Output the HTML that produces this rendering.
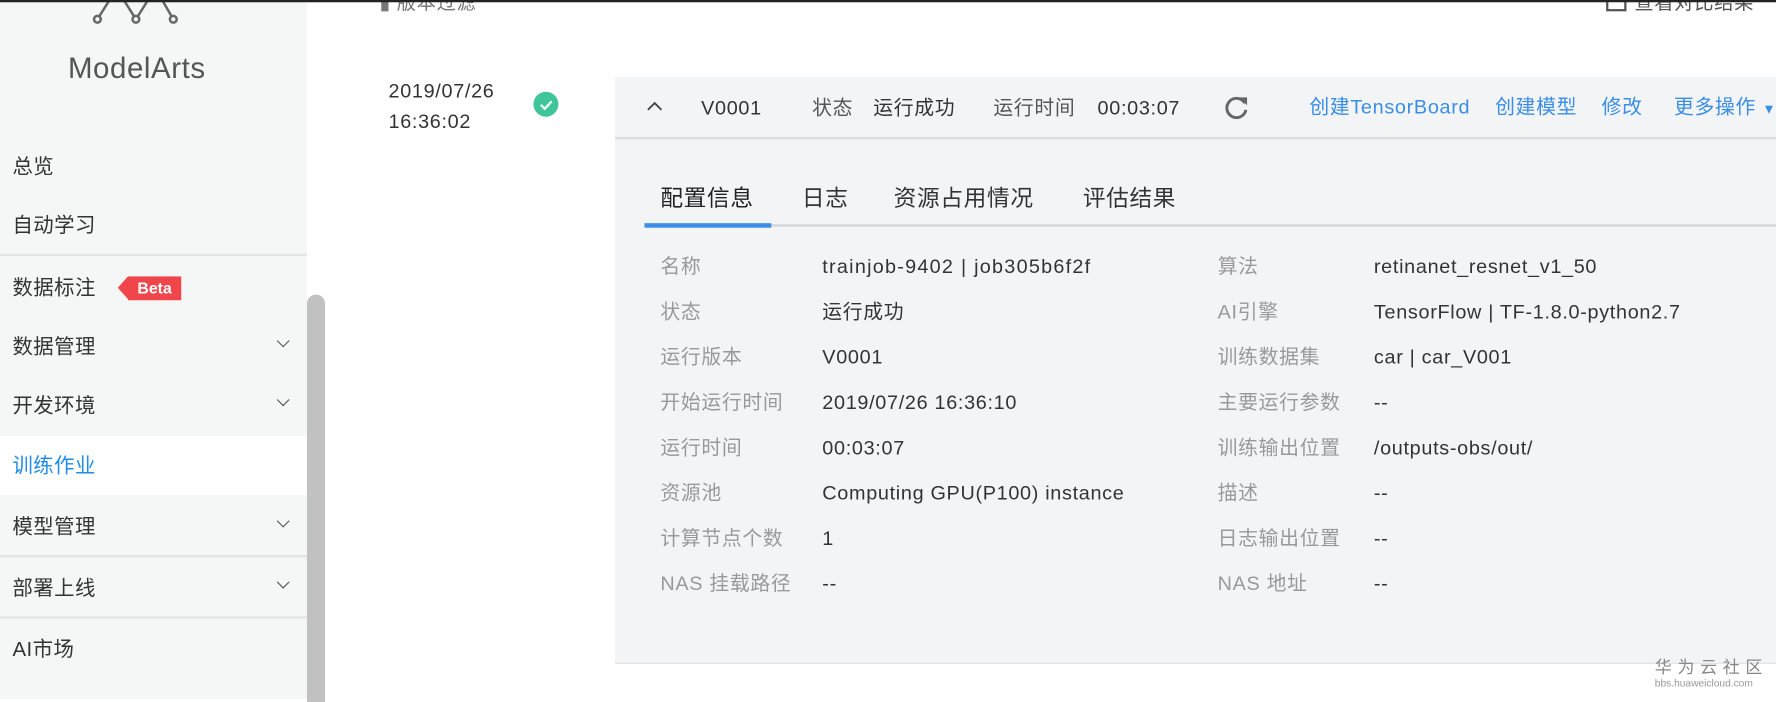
<!DOCTYPE html>
<html><head><meta charset="utf-8"><style>
html,body{margin:0;padding:0;overflow:hidden;background:#fff}
#w{position:absolute;left:0;top:0;width:1568px;height:617px;transform:scale(1.13265,1.13290);transform-origin:0 0;font-family:"Liberation Sans","Noto Sans CJK SC",sans-serif;color:#333;letter-spacing:0.6px}
.a{position:absolute;white-space:nowrap;line-height:1}
.sb{position:absolute;left:0;top:0;width:271px;height:617px;background:#f5f6f6}
.mi{position:absolute;left:11px;font-size:18px;color:#333;line-height:1;letter-spacing:0.4px}
.chev{position:absolute;left:246px;width:7px;height:7px;border-right:1.5px solid #555;border-bottom:1.5px solid #555;transform:rotate(45deg)}
.dv{position:absolute;left:0;width:271px;height:2px;background:#e3e3e3}
.lb{color:#999;font-size:17.5px}
.vl{color:#333;font-size:17.5px}
.lk{color:#3a8ee6;font-size:17.5px}
</style></head><body><div id="w">
<div style="position:absolute;left:0;top:0;width:1568px;height:2px;background:#222;z-index:5"></div>
<div class="sb"></div>
<svg class="a" style="left:78px;top:0" width="90" height="24" viewBox="0 0 90 24" fill="none" stroke="#666" stroke-width="2.2"><path d="M8 17 L20 -2 M42 17 L30 -2 M42 17 L54 -2 M75 17 L64 -2"/><circle cx="8" cy="17" r="3" fill="#f5f6f6"/><circle cx="42" cy="17" r="3" fill="#f5f6f6"/><circle cx="75" cy="17" r="3" fill="#f5f6f6"/></svg>
<div class="a" style="left:60px;top:47px;font-size:26px;color:#555;letter-spacing:0.5px">ModelArts</div>
<div class="mi" style="top:138px">总览</div>
<div class="mi" style="top:190px">自动学习</div>
<div class="dv" style="top:224px"></div>
<div class="mi" style="top:245px">数据标注</div>
<div class="a" style="left:113px;top:244px;width:47px;height:21px;background:#f0454a;color:#fff;font-size:14px;font-weight:bold;line-height:21px;text-align:center;letter-spacing:0">Beta</div>
<div class="a" style="left:104px;top:244px;width:0;height:0;border-top:10.5px solid transparent;border-bottom:10.5px solid transparent;border-right:9px solid #f0454a"></div>
<div class="mi" style="top:297px">数据管理</div><div class="chev" style="top:297px"></div>
<div class="mi" style="top:349px">开发环境</div><div class="chev" style="top:349px"></div>
<div style="position:absolute;left:0;top:385px;width:271px;height:52px;background:#fff"></div>
<div class="mi" style="top:402px;color:#1f8ceb">训练作业</div>
<div class="mi" style="top:456px">模型管理</div><div class="chev" style="top:456px"></div>
<div class="dv" style="top:490px"></div>
<div class="mi" style="top:510px">部署上线</div><div class="chev" style="top:510px"></div>
<div class="dv" style="top:544px"></div>
<div class="mi" style="top:564px">AI市场</div>
<div class="a" style="left:271px;top:260px;width:16px;height:360px;background:#c1c1c1;border-radius:8px 8px 0 0"></div>
<div class="a" style="left:335px;top:-6px;font-size:17px;color:#777">▮ 版本过滤</div>
<div class="a" style="left:1418px;top:-8px;width:14px;height:14px;border:2px solid #555"></div>
<div class="a" style="left:1443px;top:-6px;font-size:17px;color:#555">查看对比结果</div>
<div class="a" style="left:343px;top:72px;font-size:17.5px">2019/07/26</div>
<div class="a" style="left:343px;top:99px;font-size:17.5px">16:36:02</div>
<div class="a" style="left:471px;top:81px;width:22px;height:22px;border-radius:50%;background:#3ec59a"></div>
<svg class="a" style="left:471px;top:81px" width="22" height="22"><path d="M6.5 11.5 L10 15 L16 8.5" stroke="#fff" stroke-width="2" fill="none"/></svg>
<div class="a" style="left:543px;top:68px;width:1025px;height:517px;background:#f3f4f6;border-bottom:1px solid #e2e2e2"></div>
<div class="a" style="left:543px;top:121px;width:1025px;height:2px;background:#dcdde0"></div>
<svg class="a" style="left:571px;top:89px" width="14" height="10"><path d="M1 8 L7 2 L13 8" stroke="#444" stroke-width="1.6" fill="none"/></svg>
<div class="a vl" style="left:619px;top:87px">V0001</div>
<div class="a vl" style="left:717px;top:87px;color:#555">状态</div>
<div class="a vl" style="left:771px;top:87px">运行成功</div>
<div class="a vl" style="left:877px;top:87px;color:#555">运行时间</div>
<div class="a vl" style="left:969px;top:87px">00:03:07</div>
<svg class="a" style="left:1080px;top:83px" width="24" height="24" viewBox="0 0 24 24"><path d="M19 8 A8.5 8.5 0 1 0 20 14" stroke="#666" stroke-width="2.6" fill="none"/><path d="M14 3 L21 3 L21 10 Z" fill="#666"/></svg>
<div class="a lk" style="left:1156px;top:86px">创建TensorBoard</div>
<div class="a lk" style="left:1320px;top:86px">创建模型</div>
<div class="a lk" style="left:1414px;top:86px">修改</div>
<div class="a lk" style="left:1478px;top:86px">更多操作 <span style="font-size:12px">▼</span></div>
<div class="a" style="left:583px;top:166px;font-size:20px;color:#222">配置信息</div>
<div class="a" style="left:708px;top:166px;font-size:20px;color:#333">日志</div>
<div class="a" style="left:789px;top:166px;font-size:20px;color:#333">资源占用情况</div>
<div class="a" style="left:956px;top:166px;font-size:20px;color:#333">评估结果</div>
<div class="a" style="left:569px;top:198px;width:999px;height:2px;background:#d4d5d8"></div>
<div class="a" style="left:569px;top:197px;width:112px;height:4px;background:#3a8ee6"></div>
<div class="a lb" style="left:583px;top:227px">名称</div><div class="a vl" style="left:726px;top:227px;letter-spacing:1.1px">trainjob-9402 | job305b6f2f</div>
<div class="a lb" style="left:1075px;top:227px">算法</div><div class="a vl" style="left:1213px;top:227px">retinanet_resnet_v1_50</div>
<div class="a lb" style="left:583px;top:267px">状态</div><div class="a vl" style="left:726px;top:267px">运行成功</div>
<div class="a lb" style="left:1075px;top:267px">AI引擎</div><div class="a vl" style="left:1213px;top:267px">TensorFlow | TF-1.8.0-python2.7</div>
<div class="a lb" style="left:583px;top:307px">运行版本</div><div class="a vl" style="left:726px;top:307px">V0001</div>
<div class="a lb" style="left:1075px;top:307px">训练数据集</div><div class="a vl" style="left:1213px;top:307px">car | car_V001</div>
<div class="a lb" style="left:583px;top:347px">开始运行时间</div><div class="a vl" style="left:726px;top:347px">2019/07/26 16:36:10</div>
<div class="a lb" style="left:1075px;top:347px">主要运行参数</div><div class="a vl" style="left:1213px;top:347px">--</div>
<div class="a lb" style="left:583px;top:387px">运行时间</div><div class="a vl" style="left:726px;top:387px">00:03:07</div>
<div class="a lb" style="left:1075px;top:387px">训练输出位置</div><div class="a vl" style="left:1213px;top:387px">/outputs-obs/out/</div>
<div class="a lb" style="left:583px;top:427px">资源池</div><div class="a vl" style="left:726px;top:427px">Computing GPU(P100) instance</div>
<div class="a lb" style="left:1075px;top:427px">描述</div><div class="a vl" style="left:1213px;top:427px">--</div>
<div class="a lb" style="left:583px;top:467px">计算节点个数</div><div class="a vl" style="left:726px;top:467px">1</div>
<div class="a lb" style="left:1075px;top:467px">日志输出位置</div><div class="a vl" style="left:1213px;top:467px">--</div>
<div class="a lb" style="left:583px;top:507px">NAS 挂载路径</div><div class="a vl" style="left:726px;top:507px">--</div>
<div class="a lb" style="left:1075px;top:507px">NAS 地址</div><div class="a vl" style="left:1213px;top:507px">--</div>
<div class="a" style="left:1461px;top:582px;font-size:15px;color:#888;letter-spacing:5px">华为云社区</div>
<div class="a" style="left:1461px;top:599px;font-size:9px;color:#999;letter-spacing:0">bbs.huaweicloud.com</div>
</div></body></html>
